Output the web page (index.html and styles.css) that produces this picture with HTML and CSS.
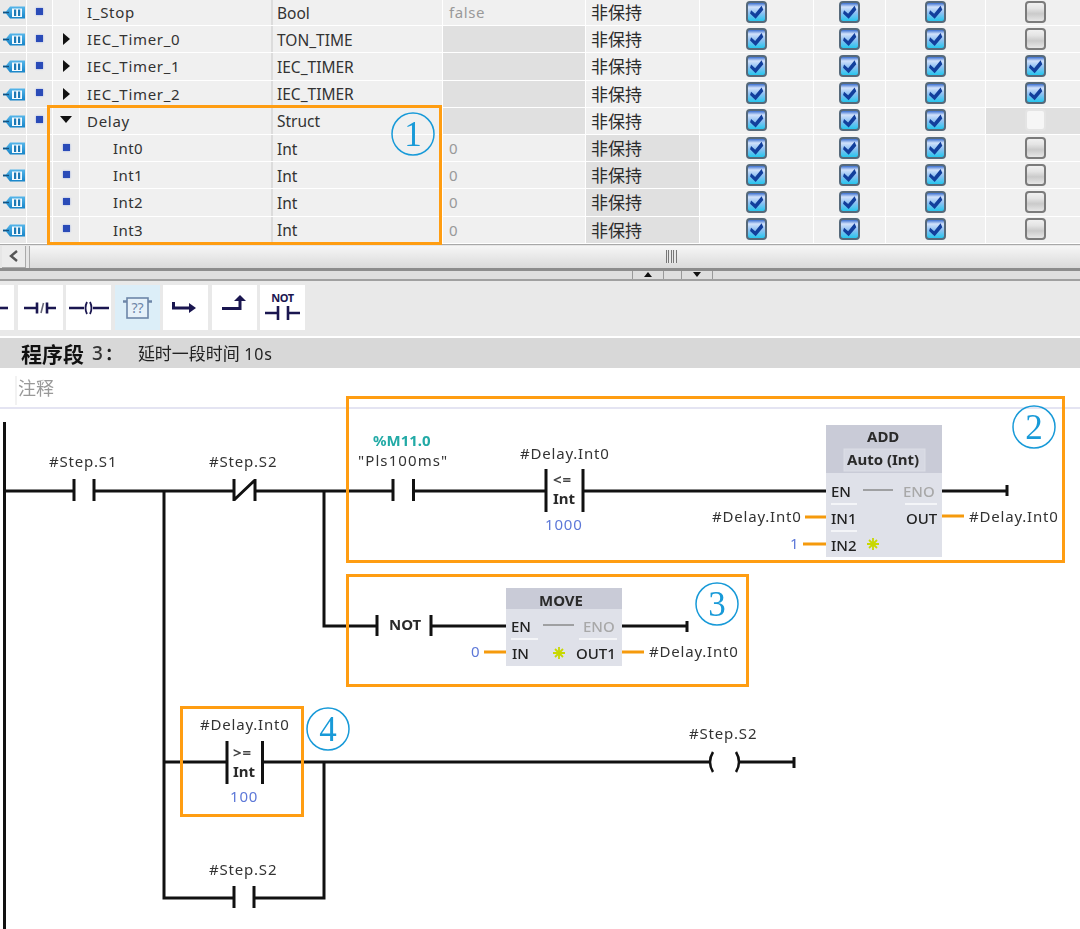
FILE: index.html
```html
<!DOCTYPE html>
<html lang="zh">
<head>
<meta charset="utf-8">
<title>程序段 3</title>
<link rel="stylesheet" href="styles.css">
</head>
<body>
<svg class="defs" width="0" height="0">
  <defs>
    <linearGradient id="tagfill" x1="0" y1="0" x2="0" y2="1">
      <stop offset="0" stop-color="#56b6ea"/>
      <stop offset="1" stop-color="#1684c8"/>
    </linearGradient>
  </defs>
  <symbol id="tag" viewBox="0 0 22 13">
    <path d="M0 5.500 H3 L7 0.500 H22 V12.500 H7 L3 7.500 H0 Z" fill="url(#tagfill)"/>
    <path d="M0 6.500 H6" stroke="#14507e" stroke-width="1.400"/>
    <rect x="9" y="2.500" width="10" height="8.500" fill="#f4fbff"/>
    <rect x="11" y="3.500" width="2.200" height="6.500" fill="#1c78b4"/>
    <rect x="15" y="3.500" width="2.200" height="6.500" fill="#1c78b4"/>
  </symbol>
</svg>
<div class="page">
  <section class="table">
    <div class="row"><span class="c-ic"><svg class="tag"><use href="#tag"/></svg></span><span class="c-dot"><i class="dot"></i></span><span class="c-exp"></span><span class="c-name">I_Stop</span><span class="c-type">Bool</span><span class="c-val">false</span><span class="c-ret">非保持</span><span class="c-cb"><b class="cb on"></b></span><span class="c-cb"><b class="cb on"></b></span><span class="c-cb"><b class="cb on"></b></span><span class="c-cb"><b class="cb"></b></span></div>
    <div class="row"><span class="c-ic"><svg class="tag"><use href="#tag"/></svg></span><span class="c-dot"><i class="dot"></i></span><span class="c-exp"><i class="arrow-r"></i></span><span class="c-name">IEC_Timer_0</span><span class="c-type">TON_TIME</span><span class="c-val off"></span><span class="c-ret">非保持</span><span class="c-cb"><b class="cb on"></b></span><span class="c-cb"><b class="cb on"></b></span><span class="c-cb"><b class="cb on"></b></span><span class="c-cb"><b class="cb"></b></span></div>
    <div class="row"><span class="c-ic"><svg class="tag"><use href="#tag"/></svg></span><span class="c-dot"><i class="dot"></i></span><span class="c-exp"><i class="arrow-r"></i></span><span class="c-name">IEC_Timer_1</span><span class="c-type">IEC_TIMER</span><span class="c-val off"></span><span class="c-ret">非保持</span><span class="c-cb"><b class="cb on"></b></span><span class="c-cb"><b class="cb on"></b></span><span class="c-cb"><b class="cb on"></b></span><span class="c-cb"><b class="cb on"></b></span></div>
    <div class="row"><span class="c-ic"><svg class="tag"><use href="#tag"/></svg></span><span class="c-dot"><i class="dot"></i></span><span class="c-exp"><i class="arrow-r"></i></span><span class="c-name">IEC_Timer_2</span><span class="c-type">IEC_TIMER</span><span class="c-val off"></span><span class="c-ret">非保持</span><span class="c-cb"><b class="cb on"></b></span><span class="c-cb"><b class="cb on"></b></span><span class="c-cb"><b class="cb on"></b></span><span class="c-cb"><b class="cb on"></b></span></div>
    <div class="row"><span class="c-ic"><svg class="tag"><use href="#tag"/></svg></span><span class="c-dot"><i class="dot"></i></span><span class="c-exp"><i class="arrow-d"></i></span><span class="c-name">Delay</span><span class="c-type">Struct</span><span class="c-val off"></span><span class="c-ret">非保持</span><span class="c-cb"><b class="cb on"></b></span><span class="c-cb"><b class="cb on"></b></span><span class="c-cb"><b class="cb on"></b></span><span class="c-cb off"><b class="cb dis"></b></span></div>
    <div class="row"><span class="c-ic"><svg class="tag"><use href="#tag"/></svg></span><span class="c-dot"></span><span class="c-exp sub"><i class="dot"></i></span><span class="c-name indent">Int0</span><span class="c-type">Int</span><span class="c-val">0</span><span class="c-ret off">非保持</span><span class="c-cb"><b class="cb on"></b></span><span class="c-cb"><b class="cb on"></b></span><span class="c-cb"><b class="cb on"></b></span><span class="c-cb"><b class="cb"></b></span></div>
    <div class="row"><span class="c-ic"><svg class="tag"><use href="#tag"/></svg></span><span class="c-dot"></span><span class="c-exp sub"><i class="dot"></i></span><span class="c-name indent">Int1</span><span class="c-type">Int</span><span class="c-val">0</span><span class="c-ret off">非保持</span><span class="c-cb"><b class="cb on"></b></span><span class="c-cb"><b class="cb on"></b></span><span class="c-cb"><b class="cb on"></b></span><span class="c-cb"><b class="cb"></b></span></div>
    <div class="row"><span class="c-ic"><svg class="tag"><use href="#tag"/></svg></span><span class="c-dot"></span><span class="c-exp sub"><i class="dot"></i></span><span class="c-name indent">Int2</span><span class="c-type">Int</span><span class="c-val">0</span><span class="c-ret off">非保持</span><span class="c-cb"><b class="cb on"></b></span><span class="c-cb"><b class="cb on"></b></span><span class="c-cb"><b class="cb on"></b></span><span class="c-cb"><b class="cb"></b></span></div>
    <div class="row"><span class="c-ic"><svg class="tag"><use href="#tag"/></svg></span><span class="c-dot"></span><span class="c-exp sub"><i class="dot"></i></span><span class="c-name indent">Int3</span><span class="c-type">Int</span><span class="c-val">0</span><span class="c-ret off">非保持</span><span class="c-cb"><b class="cb on"></b></span><span class="c-cb"><b class="cb on"></b></span><span class="c-cb"><b class="cb on"></b></span><span class="c-cb"><b class="cb"></b></span></div>
  </section>

  <div class="hscroll">
    <span class="sb-btn"><svg width="12" height="14" viewBox="0 0 12 14"><path d="M9 2 L3 7 L9 12" fill="none" stroke="#555" stroke-width="2.400"/></svg></span>
    <span class="sb-track"><i class="grip"></i></span>
  </div>

  <div class="splitter">
    <span class="sp-btn"><i class="tri-up"></i></span>
    <span class="sp-btn"><i class="tri-down"></i></span>
  </div>

  <div class="toolbar">
    <span class="tool first"><svg width="14" height="45" viewBox="0 0 14 45"><path d="M0 23 H8" stroke="#1a1650" stroke-width="2.600"/></svg></span>
    <span class="tool"><svg width="45" height="45" viewBox="0 0 45 45"><path d="M6 23 H19 M19 17.500 V28.500 M38 23 H29 M29 17.500 V28.500" stroke="#1a1650" stroke-width="2.600" fill="none"/><path d="M25.500 18 L23 28" stroke="#667" stroke-width="1.600"/></svg></span>
    <span class="tool"><svg width="45" height="45" viewBox="0 0 45 45"><path d="M3 23 H18 M27 23 H43" stroke="#1a1650" stroke-width="2.600"/><path d="M21 17 Q18 23 21 29 M24 17 Q27 23 24 29" stroke="#1a1650" stroke-width="1.800" fill="none"/></svg></span>
    <span class="tool active"><svg width="45" height="45" viewBox="0 0 45 45"><rect x="12" y="13" width="21" height="20" fill="#e6f1f9" stroke="#6d86a8" stroke-width="1.600"/><path d="M8 16.500 H12 M33 16.500 H37" stroke="#6d86a8" stroke-width="2.400"/><text class="qq" x="22.500" y="28" text-anchor="middle">??</text></svg></span>
    <span class="tool"><svg width="45" height="45" viewBox="0 0 45 45"><path d="M10.500 17 V23 H27" stroke="#1a1650" stroke-width="3" fill="none"/><path d="M26 18 L33 23 L26 28 Z" fill="#1a1650"/></svg></span>
    <span class="tool"><svg width="46" height="45" viewBox="0 0 46 45"><path d="M10 23.500 H28 V15" stroke="#1a1650" stroke-width="3" fill="none"/><path d="M22 16 L28 10 L34 16 Z" fill="#1a1650"/></svg></span>
    <span class="tool not"><span class="not-t">NOT</span><svg width="45" height="20" viewBox="0 0 45 20"><path d="M5 10 H18 M18 3 V17 M40 10 H28 M28 3 V17" stroke="#1a1650" stroke-width="2.600" fill="none"/></svg></span>
  </div>

  <header class="seg">
    <strong class="seg-t">程序段</strong><span class="seg-n">3</span><span class="seg-c">：</span>
    <span class="seg-d">延时一段时间 <span class="seg-l">10s</span></span>
  </header>

  <div class="comment"><span class="comment-t">注释</span></div>
  <div class="divider"></div>
</div>

<svg class="canvas" width="1080" height="929" viewBox="0 0 1080 929">
  <!-- function blocks -->
  <rect class="b-body" x="826" y="425" width="116" height="132"/>
  <rect class="b-head" x="826" y="425" width="116" height="48"/>
  <rect class="b-inset" x="844" y="449" width="81" height="22"/>
  <path class="b-sep" d="M831 504 H857 M905 504 H937 M831 531 H857"/>
  <rect class="b-body" x="506" y="588" width="116" height="78"/>
  <rect class="b-head" x="506" y="588" width="116" height="21"/>
  <path class="b-sep" d="M511 639 H538 M579 639 H617"/>

  <!-- wires -->
  <g class="wire">
    <path d="M4.500 422 V929"/>
    <path d="M4 491 H74 M74 479 V501 M94 479 V501 M94 491 H234 M234 479 V501 M255 479 V501 M234 500 L255 480 M255 491 H393"/>
    <path d="M393 479 V501 M413.500 479 V501 M413 491 H546 M546 469 V512 M583 469 V512 M583 491 H826"/>
    <path d="M942 491 H1007 M1007 485 V496"/>
    <path d="M164 491 V898 H234 M234 886 V908 M254 886 V908 M254 898 H324 V762"/>
    <path d="M164 762 H227 M227 741 V784 M262.500 741 V784 M262 762 H709 M739 762 H794 M794 757 V768"/>
    <path class="thin" d="M713 752 Q707 762 713 772 M736 752 Q742 762 736 772"/>
    <path d="M324 491 V626 H377 M377 615 V636 M431 615 V636 M431 626 H506 M622 626 H687 M687 621 V632"/>
  </g>
  <path class="gray-w" d="M863 490 H893 M543 625 H574"/>
  <g class="orange-w">
    <path d="M805 517 H826 M803 544 H826 M942 516 H964 M484 652 H506 M622 652 H644"/>
  </g>

  <!-- labels -->
  <g class="lbl">
    <text x="49" y="467">#Step.S1</text>
    <text x="209" y="467">#Step.S2</text>
    <text class="wide" x="358" y="466">"Pls100ms"</text>
    <text x="520" y="459">#Delay.Int0</text>
    <text x="712" y="522">#Delay.Int0</text>
    <text x="969" y="522">#Delay.Int0</text>
    <text x="649" y="657">#Delay.Int0</text>
    <text x="200" y="730">#Delay.Int0</text>
    <text x="689" y="739">#Step.S2</text>
    <text x="209" y="875">#Step.S2</text>
  </g>
  <text class="addr" x="373" y="446">%M11.0</text>
  <g class="bold">
    <text class="op" x="553" y="485">&lt;=</text>
    <text class="op" x="233" y="758">&gt;=</text>
    <text x="553" y="504">Int</text>
    <text x="233" y="777">Int</text>
    <text x="389" y="630">NOT</text>
    <text x="867" y="442">ADD</text>
    <text x="847" y="465">Auto (Int)</text>
    <text x="539" y="606">MOVE</text>
  </g>
  <g class="num">
    <text x="545" y="530">1000</text>
    <text x="230" y="802">100</text>
    <text x="790" y="549">1</text>
    <text x="471" y="657">0</text>
  </g>
  <g class="pin">
    <text x="831" y="497">EN</text>
    <text x="831" y="524">IN1</text>
    <text x="831" y="551">IN2</text>
    <text x="906" y="524">OUT</text>
    <text x="511" y="632">EN</text>
    <text x="512" y="659">IN</text>
    <text x="576" y="659">OUT1</text>
  </g>
  <g class="pin dim">
    <text x="903" y="497">ENO</text>
    <text x="583" y="632">ENO</text>
  </g>
  <g class="star">
    <path d="M873 538 V550 M867 544 H879 M869 540 L877 548 M877 540 L869 548"/>
    <path d="M559 647 V659 M553 653 H565 M555 649 L563 657 M563 649 L555 657"/>
  </g>

  <!-- annotations -->
  <g class="note">
    <rect x="48.500" y="106.500" width="392" height="137"/>
    <rect x="347.500" y="397.500" width="716" height="164"/>
    <rect x="347.500" y="575.500" width="400" height="110"/>
    <rect x="181.500" y="707.500" width="121" height="108"/>
  </g>
  <g class="ring">
    <circle cx="413" cy="134" r="21"/>
    <circle cx="1034" cy="427" r="21"/>
    <circle cx="717" cy="604" r="21"/>
    <circle cx="328" cy="729" r="21"/>
  </g>
  <g class="ring-n">
    <text x="413" y="146">1</text>
    <text x="1034" y="439">2</text>
    <text x="717" y="616">3</text>
    <text x="328" y="741">4</text>
  </g>
</svg>
</body>
</html>
```
FILE: styles.css
```css
* { box-sizing: border-box; }
html, body { margin: 0; padding: 0; background: #fff; }
body {
  width: 1080px;
  height: 929px;
  overflow: hidden;
  position: relative;
  font-family: "Noto Sans", "Noto Sans CJK SC", sans-serif;
  color: #333;
}
.defs { position: absolute; }
.page { filter: blur(0.35px); }

.table {
  display: flex;
  flex-direction: column;
  gap: 1px;
  margin-top: -1px;
  background: #fff;
}
.row {
  display: grid;
  grid-template-columns: 27px 26px 27px 191px 172px 143px 114px 114px 72px 100px 100px;
  grid-template-rows: 26.2px;
  height: 26.2px;
  font-size: 15px;
  line-height: 20px;
}
.row > span { background: #f0f0f0; display: flex; align-items: center; border-right: 1px solid #fff; min-width: 0; min-height: 0; }
.row > .c-ic { background: #e9e9e9; padding-left: 3px; }
.row > .c-dot { background: #ebebeb; justify-content: center; }
.c-exp { justify-content: center; }
.row > .c-exp.sub { background: #ebebeb; }
.row > .c-name { border-right: 0; padding-left: 7px; letter-spacing: .7px; }
.row > .c-name.indent { padding-left: 33px; letter-spacing: .4px; }
.row > .c-type { padding-left: 4px; padding-top: 1px; border-left: 2px solid #dcdcdc; font-size: 15.5px; }
.c-val { padding-left: 6px; color: #999; letter-spacing: .6px; }
.row > .c-ret { padding-left: 5px; padding-top: 2px; font-size: 17px; color: #2b2b2b; }
.c-cb { justify-content: center; }
.row > .off { background: #e0e0e0; }
.tag { width: 22px; height: 13px; display: block; margin-top: 1px; }
.dot { width: 7px; height: 7px; background: #2a4bb8; box-shadow: 0 0 2px #8aa0e0; display: block; margin-top: -2px; }
.arrow-r { width: 0; height: 0; border-left: 7px solid #111; border-top: 6px solid transparent; border-bottom: 6px solid transparent; display: block; }
.arrow-d { width: 0; height: 0; border-top: 7px solid #111; border-left: 6.500px solid transparent; border-right: 6.500px solid transparent; display: block; margin-top: -3px; }

.cb {
  position: relative;
  display: block;
  width: 21px;
  height: 22px;
  border-radius: 4px;
  border: 2px solid #7b7b7b;
  background: linear-gradient(#f0f0f0 0%, #e4e4e4 30%, #cacaca 60%, #e6e6e6 100%);
  margin-top: -1px;
}
.cb.on {
  border-color: #56697a;
  background: linear-gradient(#3a6fd0 0%, #d2e2fb 22%, #8fc0f2 55%, #25c6ee 100%);
}
.cb.on::after {
  content: "";
  position: absolute;
  inset: 0;
  background: #123f9c;
  clip-path: polygon(18% 42%, 42% 62%, 80% 18%, 90% 40%, 45% 90%, 12% 60%);
}
.cb.dis { border-color: #e4e4e4; background: #f6f6f6; }

.hscroll {
  display: flex;
  height: 24px;
  margin-top: 1px;
  border-top: 1px solid #a8a8a8;
  padding: 1px 0 0 2px;
  gap: 3px;
  background: #e6e6e6;
}
.sb-btn {
  width: 24px;
  height: 22px;
  display: flex;
  align-items: center;
  justify-content: center;
  background: #ececec;
  border-right: 1px solid #aaa;
  border-bottom: 1px solid #aaa;
}
.sb-track {
  flex: 1;
  height: 22px;
  display: flex;
  align-items: center;
  padding-left: 636px;
  background: linear-gradient(#f6f6f6, #dadada);
  border-left: 1px solid #aaa;
}
.grip { width: 11px; height: 13px; background: repeating-linear-gradient(90deg, #777 0 1px, #e8e8e8 1px 2.500px); display: block; }

.splitter {
  display: flex;
  height: 13px;
  padding-left: 632px;
  gap: 17px;
  border-top: 3px solid #8c8c8c;
  border-bottom: 2px solid #a0a0a0;
  background: #dedede;
}
.sp-btn {
  width: 32px;
  display: flex;
  justify-content: center;
  border-left: 1px solid #999;
  border-right: 1px solid #999;
}
.tri-up { width: 0; height: 0; border-bottom: 5px solid #111; border-left: 4px solid transparent; border-right: 4px solid transparent; margin-top: 1px; }
.tri-down { width: 0; height: 0; border-top: 5px solid #111; border-left: 4px solid transparent; border-right: 4px solid transparent; margin-top: 1px; }

.toolbar {
  display: flex;
  height: 57px;
  gap: 3.500px;
  padding-top: 4px;
  background: #e9e9e9;
  border-bottom: 2px solid #fff;
}
.tool { display: block; width: 45px; height: 45px; background: #fff; flex: none; }
.tool svg { display: block; }
.tool.first { width: 14px; }
.tool.active { background: #dceef8; }
.tool.not { display: flex; flex-direction: column; align-items: center; }
.not-t { font-size: 11px; line-height: 11px; font-weight: 700; color: #1a1650; margin-top: 7px; letter-spacing: -.4px; }
.qq { font: 14px "Noto Sans", sans-serif; fill: #6d86a8; }

.seg {
  display: flex;
  align-items: center;
  height: 30px;
  padding-left: 21px;
  background: #d8d8d8;
  color: #222;
}
.seg-t { font-size: 21px; font-weight: 700; color: #111; }
.seg-n { font-size: 19px; margin-left: 8px; color: #333; font-weight: 500; }
.seg-c { font-size: 17px; font-weight: 700; width: 33px; margin-left: 2px; }
.seg-d { font-size: 17px; white-space: pre; }
.seg-l { font-size: 16px; letter-spacing: .8px; }

.comment {
  margin-top: 8px;
  margin-left: 15px;
  height: 29px;
  padding-left: 3px;
  border-left: 2px solid #f2f2f2;
  line-height: 25px;
  font-size: 18px;
  color: #999;
}
.comment-t { display: block; margin-left: -2px; }
.divider { height: 2px; margin-top: 2px; background: #e4e4f2; }

.canvas {
  position: absolute;
  left: 0;
  top: 0;
  overflow: hidden;
  filter: blur(0.3px);
}
.canvas text { font-family: "Noto Sans", sans-serif; }
.wire path { fill: none; stroke: #111; stroke-width: 3; }
.wire path.thin { stroke-width: 2.500; }
.gray-w { stroke: #8a8a8a; stroke-width: 1.500; fill: none; }
.orange-w path { stroke: #f59a0c; stroke-width: 3; fill: none; }
.b-body { fill: #dfe1e9; }
.b-head { fill: #c9cbd7; }
.b-inset { fill: #d6d8e2; stroke: #dcdee6; stroke-width: 1; }
.b-sep { stroke: #f4f5f8; stroke-width: 2; fill: none; }
.lbl text { font-size: 15px; fill: #333; letter-spacing: .8px; }
.lbl text.wide { letter-spacing: 1.1px; }
.addr { font-size: 15px; font-weight: 700; fill: #22aaa6; }
.bold text { font-size: 15px; font-weight: 700; fill: #2a2a2a; }
.bold text.op { font-size: 15px; letter-spacing: 1px; fill: #444; }
.num text { font-size: 15px; fill: #5d78d8; letter-spacing: .8px; }
.pin text { font-size: 15px; font-weight: 500; fill: #222; }
.pin.dim text { fill: #a8a8a8; }
.star path { stroke: #c8d800; stroke-width: 1.800; fill: none; }
.note rect { fill: none; stroke: #ff9d12; stroke-width: 3; }
.ring circle { fill: none; stroke: #189ad8; stroke-width: 1.500; }
.canvas .ring-n text { font-family: "Liberation Serif", serif; font-size: 35px; fill: #189ad8; text-anchor: middle; }
```
